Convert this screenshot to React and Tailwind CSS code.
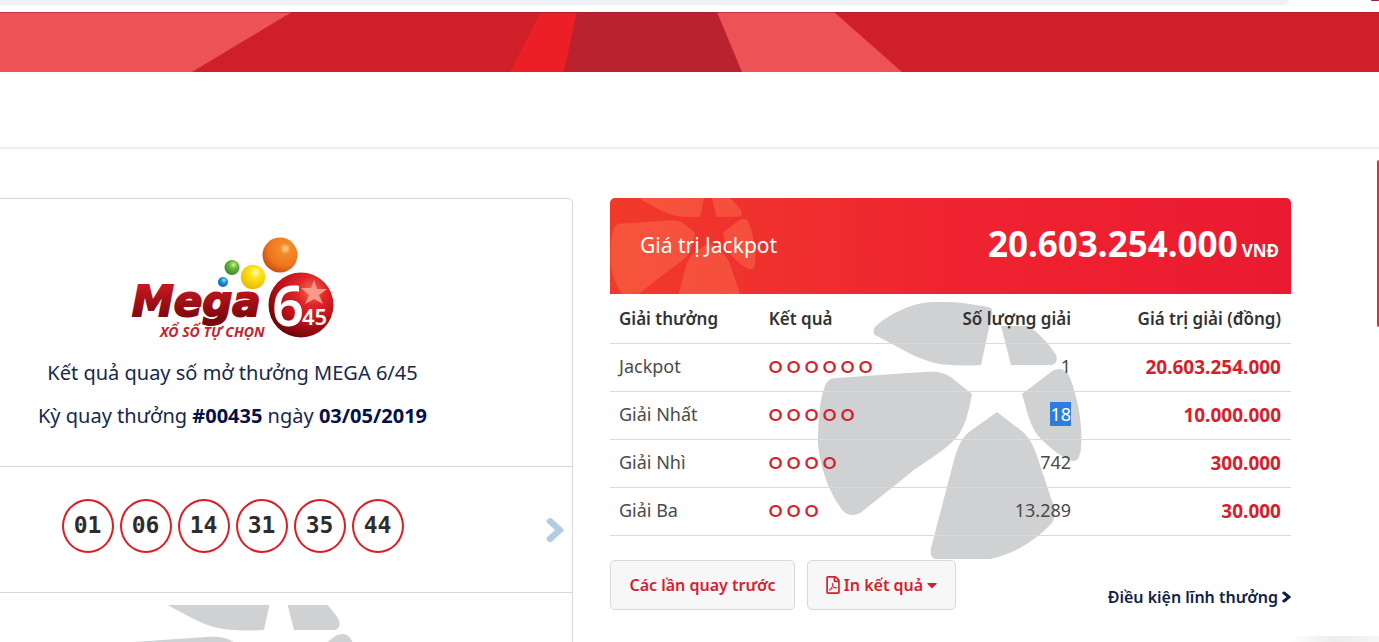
import React from "react";
import { FaRegFilePdf, FaCaretDown, FaChevronRight } from "react-icons/fa";

const numbers = ["01", "06", "14", "31", "35", "44"];

const prizes = [
  { name: "Jackpot", matches: 6, winners: "1", value: "20.603.254.000" },
  { name: "Giải Nhất", matches: 5, winners: "18", value: "10.000.000", selected: true },
  { name: "Giải Nhì", matches: 4, winners: "742", value: "300.000" },
  { name: "Giải Ba", matches: 3, winners: "13.289", value: "30.000" },
];

function StarMark({ className, viewBox = "0 0 264 258" }) {
  return (
    <svg viewBox={viewBox} className={className} fill="currentColor" aria-hidden="true">
      <path d="M56 32C55 28 56 26 59 23C73 11 94 1 114 0C134 -1 155 2 170 5C174 6 175 8 174 12L163 63C145 64 128 64 113 60C95 55 77 43 59 34C57 33 56 33 56 32Z" />
      <path d="M183 24H210C221 31 232 43 238 53C240 58 238 63 232 63H193Z" />
      <path d="M18 76L105 70C118 69 126 70 134 76L154 92C151 109 147 126 138 136C127 148 110 158 96 168L46 208C39 214 31 215 25 209C10 190 2 164 0 142C0 121 1 99 7 84C9 79 12 76 18 76Z" />
      <path d="M204 92L233 70C242 64 249 68 252 76C260 97 265 122 263 146C262 155 260 159 255 159C246 157 233 147 222 136C212 125 209 109 204 92Z" />
      <path d="M179 110L205 130C212 136 216 145 219 154L236 205C238 213 236 220 231 224C213 242 194 252 172 257H118C113 256 112 252 113 246L136 158C140 145 144 135 151 130Z" />
    </svg>
  );
}

function MegaLogo() {
  return (
    <svg viewBox="130 236 206 112" className="h-[112px] w-[206px] shrink-0" role="img" aria-label="Mega 6/45">
      <defs>
        <radialGradient id="orange" cx="65%" cy="32%" r="70%">
          <stop offset="0" stopColor="#fdd7a0" /><stop offset=".22" stopColor="#f58a2a" /><stop offset=".7" stopColor="#ee741d" /><stop offset="1" stopColor="#c95412" />
        </radialGradient>
        <radialGradient id="green" cx="60%" cy="32%" r="70%">
          <stop offset="0" stopColor="#d5efac" /><stop offset=".35" stopColor="#72ba3b" /><stop offset="1" stopColor="#2f8a27" />
        </radialGradient>
        <radialGradient id="yellow" cx="60%" cy="32%" r="70%">
          <stop offset="0" stopColor="#fffbc9" /><stop offset=".3" stopColor="#ffe61c" /><stop offset="1" stopColor="#e8b800" />
        </radialGradient>
        <radialGradient id="blue" cx="60%" cy="32%" r="70%">
          <stop offset="0" stopColor="#a9ddf6" /><stop offset=".4" stopColor="#1d93d6" /><stop offset="1" stopColor="#0d5ea8" />
        </radialGradient>
        <radialGradient id="red" cx="66%" cy="28%" r="75%">
          <stop offset="0" stopColor="#f56a55" /><stop offset=".3" stopColor="#e02528" /><stop offset=".65" stopColor="#bd1019" /><stop offset="1" stopColor="#6d0509" />
        </radialGradient>
        <linearGradient id="word" x1="0" y1="0" x2="0" y2="1">
          <stop offset=".2" stopColor="#c41720" /><stop offset=".85" stopColor="#7c070d" />
        </linearGradient>
      </defs>
      <circle cx="280" cy="255" r="17.5" fill="url(#orange)" />
      <circle cx="232" cy="267.5" r="7.5" fill="url(#green)" />
      <circle cx="253" cy="277" r="12.2" fill="url(#yellow)" />
      <circle cx="223" cy="282" r="5" fill="url(#blue)" />
      <text x="132" y="316" fontFamily="'DejaVu Sans', sans-serif" fontSize="42" fontWeight="700" fontStyle="italic" fill="url(#word)" stroke="url(#word)" strokeWidth="2">Mega</text>
      <circle cx="301" cy="305" r="32.5" fill="url(#red)" />
      <path d="M314 280L317 289L327 289L319 295L323 304L314 299L305 304L309 295L301 288L311 288Z" fill="#f79a8b" />
      <text x="272" y="326" fontFamily="'Noto Sans', sans-serif" fontSize="56" fontWeight="600" fill="#fff">6</text>
      <text x="302" y="325" fontFamily="'Noto Sans', sans-serif" fontSize="22" fontWeight="600" fill="#fff">45</text>
      <text x="160" y="337" fontFamily="'Noto Sans', sans-serif" fontSize="14" fontWeight="700" fontStyle="italic" fill="#c4242c">XỔ SỐ TỰ CHỌN</text>
    </svg>
  );
}

function Banner() {
  return (
    <svg viewBox="0 0 1379 60" preserveAspectRatio="none" className="block h-[60px] w-full" aria-hidden="true">
      <rect width="1379" height="60" fill="#cf2029" />
      <path d="M0 0H292L192 60H0Z" fill="#ed5256" />
      <path d="M541 0H577L564 60H510Z" fill="#ec1f27" />
      <path d="M577 0H717L742 60H564Z" fill="#bb222f" />
      <path d="M717 0H834L902 60H742Z" fill="#ed5256" />
      <path d="M0 .5H1379" stroke="#8a2030" strokeOpacity=".5" />
    </svg>
  );
}

function DrawCard() {
  return (
    <section className="overflow-hidden rounded-[5px] border border-[#d8d8d8] text-center text-[#16284f]">
      <div className="flex h-[268px] flex-col items-center border-b border-[#d8d8d8] pt-[37px]">
        <MegaLogo />
        <h2 className="mt-[9px] text-[20px] leading-8">Kết quả quay số mở thưởng MEGA 6/45</h2>
        <p className="mt-[11px] text-[20px] leading-8">
          Kỳ quay thưởng <b className="text-[#04104a]">#00435</b> ngày <b className="text-[#04104a]">03/05/2019</b>
        </p>
      </div>
      <div className="relative flex h-[126px] items-center justify-center border-b border-[#d8d8d8] pb-2">
        <ul className="flex gap-[6px]">
          {numbers.map((n) => (
            <li key={n} className="flex h-[54px] w-[52px] items-center justify-center rounded-[50%] border-2 border-[#dd1c24] font-['DejaVu_Sans_Mono',monospace] text-[23px] font-bold text-[#2d2d2d]">
              {n}
            </li>
          ))}
        </ul>
        <button type="button" aria-label="Kỳ tiếp theo" className="absolute right-2 bottom-[49px] text-[#b3cce2]">
          <FaChevronRight className="h-[26px] w-[18px]" preserveAspectRatio="none" stroke="currentColor" strokeWidth="40" />
        </button>
      </div>
      <div className="flex justify-center pt-3">
        <StarMark viewBox="0 38 264 220" className="h-[220px] w-[264px] shrink-0 text-[#d0d1d3]" />
      </div>
    </section>
  );
}

function PrizeCard() {
  return (
    <section>
      <div className="relative flex h-24 items-center justify-between overflow-hidden rounded-t-[5px] bg-linear-to-r from-[#f03a2b] via-[#ef2330] via-50% to-[#ea1a31] pr-3 pl-[30px] text-white">
        <StarMark className="absolute -top-4 left-0 h-[142px] w-[146px] text-[#ff7a55] opacity-40" />
        <h2 className="relative text-[21px]">Giá trị Jackpot</h2>
        <p className="relative flex items-baseline gap-1 pb-1">
          <strong className="text-[35px] leading-10">20.603.254.000</strong>
          <strong className="text-[17px]">VNĐ</strong>
        </p>
      </div>
      <div className="relative">
        <StarMark className="absolute top-2 left-[208px] h-[258px] w-[264px] text-[#d0d1d3]" />
        <table className="relative w-full border-collapse text-[18px] text-[#4a4a4a]">
          <thead>
            <tr className="h-[49px] border-b border-[#dadadb] text-[17px] text-[#333]">
              <th className="w-[22%] pl-[9px] text-left font-semibold">Giải thưởng</th>
              <th className="w-[22%] pl-[9px] text-left font-semibold">Kết quả</th>
              <th className="w-[24%] pr-[2px] text-right font-semibold">Số lượng giải</th>
              <th className="pr-[10px] text-right font-semibold">Giá trị giải (đồng)</th>
            </tr>
          </thead>
          <tbody>
            {prizes.map((p) => (
              <tr key={p.name} className="h-12 border-b border-[#dadadb]">
                <td className="pb-[2px] pl-[9px]">{p.name}</td>
                <td className="pl-[9px]">
                  <span className="flex font-[Lato,sans-serif] text-[17px] font-bold text-[#d81e2c]">
                    {Array.from({ length: p.matches }, (_, i) => (
                      <span key={i} className="w-[18px]">O</span>
                    ))}
                  </span>
                </td>
                <td className="pr-[2px] pb-[2px] text-right">
                  <span className={p.selected ? "inline-block bg-[#2b7de1] leading-6 text-white" : ""}>{p.winners}</span>
                </td>
                <td className="pr-[10px] text-right text-[19px] font-bold text-[#d81e2c]">{p.value}</td>
              </tr>
            ))}
          </tbody>
        </table>
      </div>
      <div className="relative mt-6 flex items-start gap-3 text-[16px] font-semibold text-[#d81e2c]">
        <button type="button" className="h-[50px] w-[185px] rounded-[5px] border border-[#d9d9d9] bg-[#f7f7f7]">Các lần quay trước</button>
        <button type="button" className="flex h-[50px] w-[149px] items-center justify-center gap-1 rounded-[5px] border border-[#d9d9d9] bg-[#f7f7f7]">
          <FaRegFilePdf className="h-[18px] w-[14px]" />
          <span>In kết quả</span>
          <FaCaretDown className="h-[16px] w-[10px]" />
        </button>
        <a href="#dieu-kien" className="mt-[25px] ml-auto flex items-center gap-1 text-[#101d4d]">
          Điều kiện lĩnh thưởng
          <FaChevronRight className="h-3 w-[9px]" preserveAspectRatio="none" stroke="currentColor" strokeWidth="40" />
        </a>
      </div>
    </section>
  );
}

export default function App() {
  return (
    <div className="relative h-screen overflow-hidden bg-white font-['Noto_Sans',sans-serif]">
      <div className="flex h-3 items-start justify-between">
        <div className="h-[5px] w-[1289px] rounded-br-full bg-[#eef1f5]" />
        <div className="h-px w-2 rounded-b-full bg-[#9b1650]" />
      </div>
      <Banner />
      <div className="h-[77px] border-b-2 border-[#eeeeee]" />
      <main className="mt-[49px] mr-[88px] -ml-[108px] grid grid-cols-2 gap-[37px]">
        <DrawCard />
        <PrizeCard />
      </main>
      <div className="absolute top-[160px] right-0 h-[167px] w-[2px] rounded-l bg-[#d9303a]" />
      <div className="absolute right-0 bottom-0 h-[6px] w-[90px] bg-linear-to-r from-white via-[#ececec] to-[#f6f6f6]" />
    </div>
  );
}
